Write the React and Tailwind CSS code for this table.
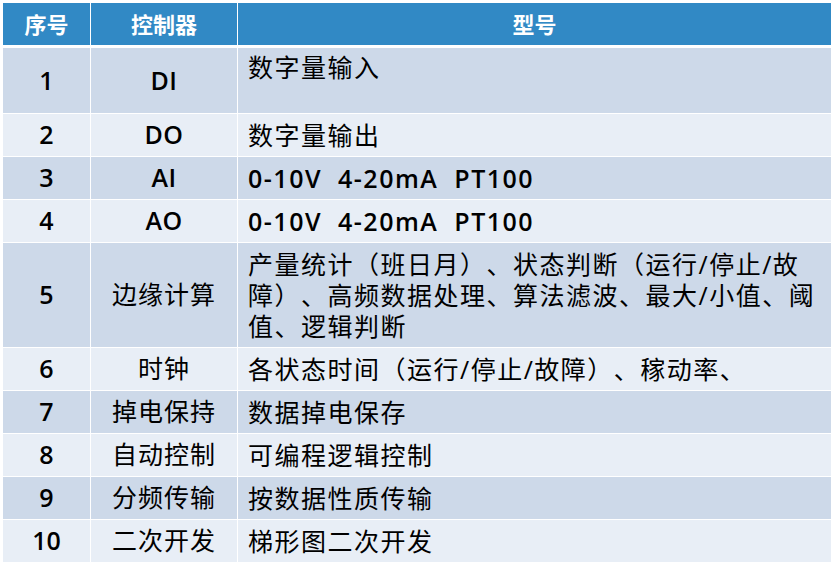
import React from 'react';

const rows = [
    { no: '1', name: 'DI', lines: ['数字量输入'], h: 'h-[65px]', top: true, latin: true },
    { no: '2', name: 'DO', lines: ['数字量输出'], latin: true },
    { no: '3', name: 'AI', lines: ['0-10V  4-20mA  PT100'], latin: true, boldText: true },
    { no: '4', name: 'AO', lines: ['0-10V  4-20mA  PT100'], latin: true, boldText: true },
    {
        no: '5',
        name: '边缘计算',
        lines: ['产量统计（班日月）、状态判断（运行/停止/故', '障）、高频数据处理、算法滤波、最大/小值、阈', '值、逻辑判断'],
        h: 'h-[104px]',
    },
    { no: '6', name: '时钟', lines: ['各状态时间（运行/停止/故障）、稼动率、'] },
    { no: '7', name: '掉电保持', lines: ['数据掉电保存'] },
    { no: '8', name: '自动控制', lines: ['可编程逻辑控制'] },
    { no: '9', name: '分频传输', lines: ['按数据性质传输'] },
    { no: '10', name: '二次开发', lines: ['梯形图二次开发'] },
];

const font = "font-['Open_Sans','Noto_Sans_CJK_SC',sans-serif]";

export default function App() {
    return (
        <div className={`w-[835px] h-[563px] bg-white pt-[3px] pl-[3px] [text-spacing-trim:space-all] ${font}`}>
            <div className="w-[828px] flex flex-col">
                {/* header */}
                <div className="flex h-[42px] gap-px bg-white text-white font-bold text-[22px] mb-[3px]">
                    <div className="w-[87px] bg-[#3189c5] flex items-center justify-center">序号</div>
                    <div className="w-[146px] bg-[#3189c5] flex items-center justify-center">控制器</div>
                    <div className="flex-1 bg-[#3189c5] flex items-center justify-center">型号</div>
                </div>

                <div className="flex flex-col gap-px">
                    {rows.map((row, index) => {
                        const bg = index % 2 === 0 ? 'bg-[#cdd9e9]' : 'bg-[#e8eef6]';
                        return (
                            <div key={row.no} className={`flex gap-px ${row.h || 'h-[42px]'}`}>
                                <div className={`w-[87px] ${bg} flex items-center justify-center text-[25px] font-semibold text-black`}>
                                    {row.no}
                                </div>
                                <div
                                    className={`w-[146px] ${bg} flex items-center justify-center text-black ${
                                        row.latin ? 'text-[25px] font-semibold tracking-[0.5px]' : 'text-[25px] tracking-[1px]'
                                    }`}
                                >
                                    {row.name}
                                </div>
                                <div
                                    className={`flex-1 ${bg} flex flex-col pl-[10px] text-black text-[25px] leading-[31px] ${
                                        row.top ? 'justify-start pt-[4px]' : 'justify-center'
                                    } ${row.boldText ? 'font-semibold tracking-[1.5px]' : 'tracking-[1.5px]'}`}
                                >
                                    {row.lines.map((line, i) => (
                                        <span key={i} className="whitespace-pre">
                                            {line}
                                        </span>
                                    ))}
                                </div>
                            </div>
                        );
                    })}
                </div>
            </div>
        </div>
    );
}
